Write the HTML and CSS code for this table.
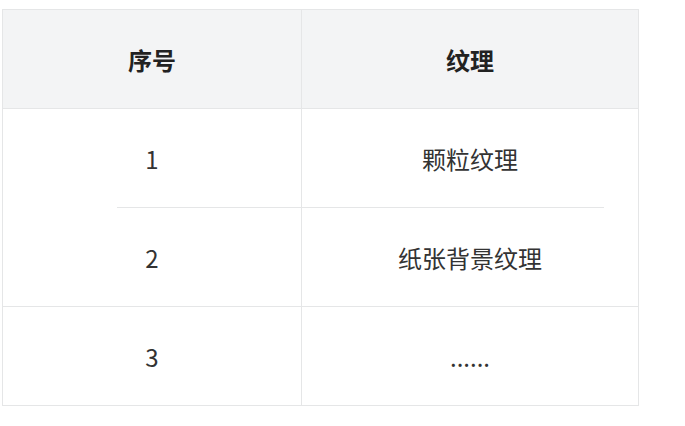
FILE: index.html
```html
<!DOCTYPE html>
<html lang="zh-CN">
<head>
<meta charset="utf-8">
<title>纹理</title>
<link rel="stylesheet" href="styles.css">
</head>
<body>
<div class="wrap">
  <table class="grid">
    <thead>
      <tr>
        <th class="col-no">序号</th>
        <th class="col-tex">纹理</th>
      </tr>
    </thead>
    <tbody>
      <tr class="row-first">
        <td class="col-no">1</td>
        <td class="col-tex">颗粒纹理</td>
      </tr>
      <tr>
        <td class="col-no">2</td>
        <td class="col-tex">纸张背景纹理</td>
      </tr>
      <tr>
        <td class="col-no">3</td>
        <td class="col-tex">......</td>
      </tr>
    </tbody>
  </table>
</div>
</body>
</html>
```

FILE: styles.css
```css
html, body {
  margin: 0;
  padding: 0;
  background: #ffffff;
}

.wrap {
  padding: 9px 0 0 2px;
}

.grid {
  width: 637px;
  border-collapse: separate;
  border-spacing: 0;
  border-top: 1px solid #e5e6e7;
  border-left: 1px solid #e5e6e7;
  table-layout: fixed;
  font-family: "Noto Sans CJK SC", "Noto Sans", sans-serif;
  font-size: 24px;
  color: #333333;
}

.grid tr {
  height: 99px;
}

.grid th,
.grid td {
  padding: 0;
  text-align: center;
  vertical-align: middle;
  border-right: 1px solid #e5e6e7;
  border-bottom: 1px solid #e5e6e7;
}

.grid th {
  background: #f3f4f5;
  font-weight: 700;
  color: #222222;
}

.col-no {
  width: 298px;
}

.row-first td {
  border-bottom: 0;
  background-repeat: no-repeat;
  background-image: linear-gradient(#e5e6e7, #e5e6e7);
}

.row-first td.col-no {
  background-position: right bottom;
  background-size: calc(100% - 114px) 1px;
}

.row-first td.col-tex {
  background-position: left bottom;
  background-size: 302px 1px;
}
```
